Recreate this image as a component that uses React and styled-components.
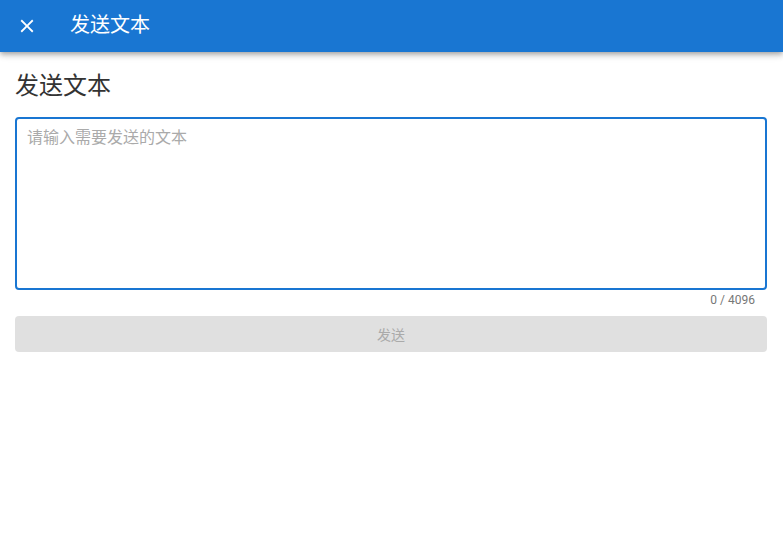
import React, { useState } from 'react';
import styled, { createGlobalStyle } from 'styled-components';

const GlobalStyle = createGlobalStyle`
    html, body {
        margin: 0;
        padding: 0;
        background: #fff;
        font-family: Roboto, "Noto Sans CJK SC", sans-serif;
    }
    * {
        box-sizing: border-box;
    }
`;

const AppBar = styled.header`
    display: flex;
    align-items: center;
    height: 52px;
    padding: 0 0 0 16px;
    background: #1976d2;
    color: #fff;
    box-shadow: 0 2px 4px -1px rgba(0,0,0,0.2), 0 4px 5px 0 rgba(0,0,0,0.14), 0 1px 10px 0 rgba(0,0,0,0.12);
`;

const CloseButton = styled.button`
    display: flex;
    align-items: center;
    justify-content: center;
    width: 22px;
    height: 22px;
    padding: 0;
    margin-right: 32px;
    border: none;
    background: none;
    color: #fff;
    cursor: pointer;
`;

const BarTitle = styled.h1`
    margin: 0;
    font-size: 20px;
    font-weight: 400;
    line-height: 1;
    padding-bottom: 2px;
`;

const Main = styled.main`
    display: flex;
    flex-direction: column;
    padding: 20px 16px 0 15px;
`;

const Heading = styled.h2`
    margin: 0 0 17px;
    font-size: 24px;
    font-weight: 400;
    line-height: 28px;
    color: #333;
`;

const Field = styled.div`
    display: flex;
    flex-direction: column;
`;

const TextArea = styled.textarea`
    width: 100%;
    height: 173px;
    padding: 9px 10px;
    border: 2px solid #1976d2;
    border-radius: 4px;
    resize: none;
    outline: none;
    font-family: Roboto, "Noto Sans CJK SC", sans-serif;
    font-size: 16px;
    line-height: 20px;
    color: #333;

    &::placeholder {
        color: #aaa;
    }
`;

const Counter = styled.div`
    align-self: flex-end;
    margin: 2px 12px 0 0;
    font-size: 12px;
    line-height: 16px;
    color: #777;
`;

const SendButton = styled.button`
    height: 36px;
    margin-top: 8px;
    border: none;
    border-radius: 4px;
    background: #e0e0e0;
    color: #aaa;
    font-family: Roboto, "Noto Sans CJK SC", sans-serif;
    font-size: 14px;
    cursor: default;
`;

function App () {
    const [text, setText] = useState('');

    return (
        <>
            <GlobalStyle/>
            <AppBar>
                <CloseButton aria-label="关闭">
                    <svg width="22" height="22" viewBox="0 0 24 24" fill="currentColor">
                        <path d="M19 6.41L17.59 5 12 10.59 6.41 5 5 6.41 10.59 12 5 17.59 6.41 19 12 13.41 17.59 19 19 17.59 13.41 12z"/>
                    </svg>
                </CloseButton>
                <BarTitle>发送文本</BarTitle>
            </AppBar>
            <Main>
                <Heading>发送文本</Heading>
                <Field>
                    <TextArea placeholder="请输入需要发送的文本"
                              maxLength={4096}
                              value={text}
                              onChange={e => setText(e.target.value)}
                    />
                    <Counter>{text.length} / 4096</Counter>
                </Field>
                <SendButton disabled={!text}>发送</SendButton>
            </Main>
        </>
    );
}

export default App;
